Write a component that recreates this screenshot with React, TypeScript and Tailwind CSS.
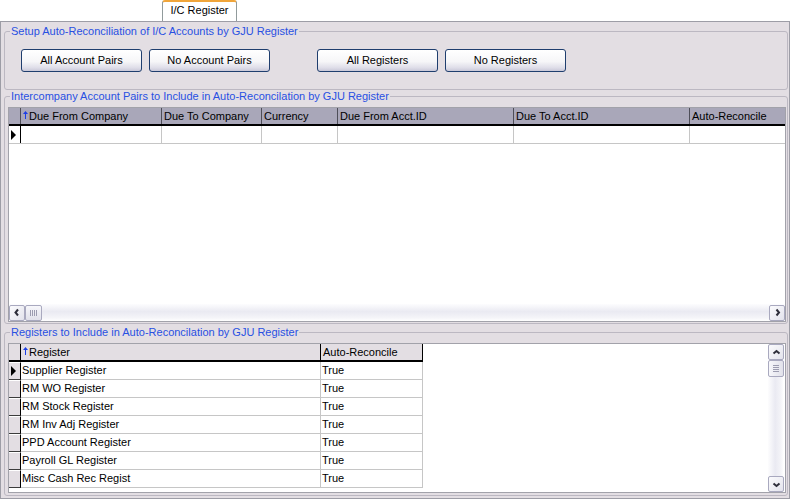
import React from "react";

const pairCols = [
  { label: "Due From Company", w: "w-[141px]", sort: true },
  { label: "Due To Company", w: "w-[100px]", sort: false },
  { label: "Currency", w: "w-[76px]", sort: false },
  { label: "Due From Acct.ID", w: "w-[176px]", sort: false },
  { label: "Due To Acct.ID", w: "w-[176px]", sort: false },
  { label: "Auto-Reconcile", w: "w-[120px]", sort: false },
];

const registers = [
  "Supplier Register",
  "RM WO Register",
  "RM Stock Register",
  "RM Inv Adj Register",
  "PPD Account Register",
  "Payroll GL Register",
  "Misc Cash Rec Regist",
];

const SortArrow = () => (
  <svg width="5" height="8" viewBox="0 0 5 8" className="mr-px -mt-[3px] shrink-0">
    <polygon points="2.5,0 0,3 5,3" fill="#1c3ee6" />
    <rect x="2" y="2" width="1" height="6" fill="#1c3ee6" />
  </svg>
);

const RowPointer = () => (
  <svg width="5" height="10" viewBox="0 0 5 10" className="shrink-0">
    <polygon points="0,0 5,5 0,10" fill="#000" />
  </svg>
);

const XPButton = ({ label }: { label: string }) => (
  <button className="h-[23px] w-[121px] shrink-0 rounded-[3px] border border-[#1f3e6e] bg-[linear-gradient(to_bottom,#ffffff_0%,#f6f6f8_55%,#dedde8_85%,#c9c8d8_100%)] text-[11px] text-black">
    {label}
  </button>
);

// scroll bar pieces, xp "silver" look
const ScrollBtn = ({ dir }: { dir: "left" | "right" | "up" | "down" }) => {
  const paths = {
    left: "M6 2.5 L3.5 5.5 L6 8.5",
    right: "M4.5 2.5 L7 5.5 L4.5 8.5",
    up: "M2.5 6.5 L5.5 4 L8.5 6.5",
    down: "M2.5 4.5 L5.5 7 L8.5 4.5",
  };
  return (
    <div className="flex h-[16px] w-[16px] shrink-0 items-center justify-center rounded-[2px] border border-[#a9a9bf] bg-[linear-gradient(to_bottom_right,#fbfbfd,#e3e3ec)]">
      <svg width="11" height="11" viewBox="0 0 11 11">
        <path d={paths[dir]} fill="none" stroke="#2e2e3a" strokeWidth="2" />
      </svg>
    </div>
  );
};

const HThumb = () => (
  <div className="flex h-[16px] w-[17px] shrink-0 items-center justify-center gap-[1px] rounded-[2px] border border-[#a9a9bf] bg-[linear-gradient(to_bottom,#f7f7fb,#e1e1ea)]">
    <div className="h-[6px] w-px bg-[#9c9cb0]" />
    <div className="h-[6px] w-px bg-[#9c9cb0]" />
    <div className="h-[6px] w-px bg-[#9c9cb0]" />
    <div className="h-[6px] w-px bg-[#9c9cb0]" />
  </div>
);

const VThumb = () => (
  <div className="flex h-[17px] w-[16px] shrink-0 flex-col items-center justify-center gap-[1px] rounded-[2px] border border-[#a9a9bf] bg-[linear-gradient(to_right,#f7f7fb,#e1e1ea)]">
    <div className="h-px w-[6px] bg-[#9c9cb0]" />
    <div className="h-px w-[6px] bg-[#9c9cb0]" />
    <div className="h-px w-[6px] bg-[#9c9cb0]" />
    <div className="h-px w-[6px] bg-[#9c9cb0]" />
  </div>
);

const Group = ({
  title,
  className,
  legendClass,
  children,
}: {
  title: string;
  className: string;
  legendClass: string;
  children: React.ReactNode;
}) => (
  <fieldset className={"rounded-[3px] border border-[#bcb8c2] " + className}>
    <legend className={"px-px text-[11px] leading-[13px] text-[#2850e2] " + legendClass}>{title}</legend>
    {children}
  </fieldset>
);

export default function App() {
  return (
    <div className="h-[501px] w-[792px] overflow-hidden bg-white font-['Liberation_Sans',Arial,sans-serif] text-[11px] text-black">
      {/* Tab strip */}
      <div className="flex h-[21px] pl-[162px]">
        <div className="relative z-10 -mb-px flex h-[21px] w-[75px] items-center justify-center rounded-t-[3px] border-x border-t-2 border-x-[#919b9c] border-t-[#f0a53a] bg-white pb-[2px]">
          I/C Register
        </div>
      </div>

      {/* Tab page */}
      <div className="flex h-[478px] w-[790px] flex-col border border-[#9d9da6] bg-[#e3dee3] pl-[3px] pr-px pt-[3px]">
        {/* Setup */}
        <Group
          title="Setup Auto-Reconciliation of I/C Accounts by GJU Register"
          className="h-[65px] shrink-0 px-[16px] pt-[11px]"
          legendClass="-ml-[11px]"
        >
          <div className="flex">
            <XPButton label="All Account Pairs" />
            <div className="w-[7px]" />
            <XPButton label="No Account Pairs" />
            <div className="w-[47px]" />
            <XPButton label="All Registers" />
            <div className="w-[7px]" />
            <XPButton label="No Registers" />
          </div>
        </Group>

        {/* Account pairs grid */}
        <Group
          title="Intercompany Account Pairs to Include in Auto-Reconcilation by GJU Register"
          className="h-[234px] shrink-0 pl-[3px] pr-px pt-[4px]"
          legendClass="ml-[2px]"
        >
          <div className="flex h-[215px] w-[778px] flex-col overflow-hidden border border-[#a2a2aa] bg-white">
            <div className="flex h-[18px] shrink-0 border-b-2 border-black bg-[#a9a7b9]">
              <div className="h-full w-[12px] shrink-0 border-r border-[#4e4e58]" />
              {pairCols.map((c) => (
                <div
                  key={c.label}
                  className={c.w + " flex h-full shrink-0 items-center overflow-hidden whitespace-nowrap border-r border-[#4e4e58] pl-[2px]"}
                >
                  {c.sort && <SortArrow />}
                  {c.label}
                </div>
              ))}
            </div>
            <div className="flex h-[18px] shrink-0 border-b border-[#c6c6c6]">
              <div className="flex h-full w-[12px] shrink-0 items-center border-r border-black pl-[2px]">
                <RowPointer />
              </div>
              {pairCols.map((c) => (
                <div key={c.label} className={c.w + " h-full shrink-0 border-r border-[#c6c6c6]"} />
              ))}
            </div>
            <div className="flex-1" />
            <div className="flex h-[17px] shrink-0 items-center bg-[linear-gradient(to_bottom,#fdfdfe,#eaeaf2_45%,#f4f4f8_80%,#ffffff)]">
              <ScrollBtn dir="left" />
              <HThumb />
              <div className="flex-1" />
              <ScrollBtn dir="right" />
            </div>
          </div>
        </Group>

        <div className="h-[2px] shrink-0" />

        {/* Registers grid */}
        <Group
          title="Registers to Include in Auto-Reconcilation by GJU Register"
          className="h-[170px] shrink-0 pl-[3px] pr-px pt-[4px]"
          legendClass="ml-[2px]"
        >
          <div className="flex h-[150px] w-[778px] overflow-hidden border border-[#a2a2aa] bg-white">
            <div className="flex flex-1 flex-col">
              <div className="flex h-[18px] shrink-0">
                <div className="h-full w-[12px] shrink-0 border-b-2 border-r border-black bg-[#e3dee3]" />
                <div className="flex h-full w-[300px] shrink-0 items-center border-b-2 border-r border-black bg-[#e3dee3] pl-[2px]">
                  <SortArrow />
                  Register
                </div>
                <div className="flex h-full w-[102px] shrink-0 items-center border-b-2 border-r border-black bg-[#e3dee3] pl-[2px]">
                  Auto-Reconcile
                </div>
              </div>
              {registers.map((r, i) => (
                <div key={r} className="flex h-[18px] shrink-0">
                  <div className="flex h-full w-[12px] shrink-0 items-center border-b border-r border-t border-b-[#3c3c3c] border-r-black border-t-white bg-[#e3dee3] pl-[2px]">
                    {i === 0 && <RowPointer />}
                  </div>
                  <div className="flex h-full w-[300px] shrink-0 items-center border-b border-r border-[#c6c6c6] pl-px">
                    {r}
                  </div>
                  <div className="flex h-full w-[102px] shrink-0 items-center border-b border-r border-[#c6c6c6] pl-px">
                    True
                  </div>
                </div>
              ))}
            </div>
            <div className="mr-px flex w-[16px] shrink-0 flex-col bg-[linear-gradient(to_right,#fdfdfe,#eaeaf2_45%,#f4f4f8_80%,#ffffff)]">
              <ScrollBtn dir="up" />
              <VThumb />
              <div className="flex-1" />
              <ScrollBtn dir="down" />
            </div>
          </div>
        </Group>
      </div>
    </div>
  );
}
